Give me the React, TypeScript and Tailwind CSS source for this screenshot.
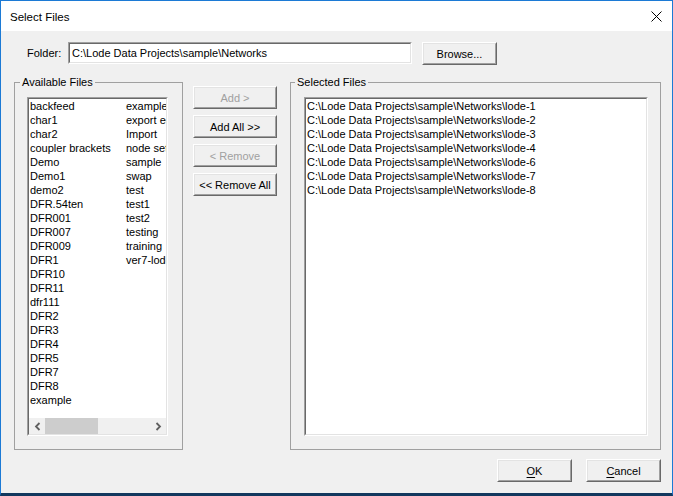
import React from "react";

const availableLeft = [
  "backfeed", "char1", "char2", "coupler brackets", "Demo", "Demo1", "demo2", "DFR.54ten",
  "DFR001", "DFR007", "DFR009", "DFR1", "DFR10", "DFR11", "dfr111", "DFR2", "DFR3", "DFR4",
  "DFR5", "DFR7", "DFR8", "example",
];

const availableRight = [
  "example2", "export edits", "Import", "node settings", "sample", "swap", "test", "test1",
  "test2", "testing", "training", "ver7-lode",
];

const selected = [1, 2, 3, 4, 6, 7, 8].map(
  (n) => `C:\\Lode Data Projects\\sample\\Networks\\lode-${n}`
);

// classic raised button (2px bevel)
const Btn = ({
  className,
  disabled,
  children,
}: {
  className: string;
  disabled?: boolean;
  children: React.ReactNode;
}) => (
  <button
    className={`h-[23px] shrink-0 border border-t-white border-l-white border-r-[#696969] border-b-[#696969] bg-[#f0f0f0] p-0 ${className}`}
  >
    <div
      className={`flex h-full w-full items-center justify-center border border-t-[#e3e3e3] border-l-[#e3e3e3] border-r-[#a0a0a0] border-b-[#a0a0a0] text-[11px] leading-[14px] ${
        disabled ? "text-[#a0a0a0]" : "text-black"
      }`}
    >
      {children}
    </div>
  </button>
);

// sunken 3d box used by inputs and lists
const Sunken = ({ className, children }: { className: string; children?: React.ReactNode }) => (
  <div
    className={`shrink-0 border border-t-[#a0a0a0] border-l-[#a0a0a0] border-r-white border-b-white ${className}`}
  >
    <div className="flex h-full w-full flex-col border border-t-[#696969] border-l-[#696969] border-r-[#e3e3e3] border-b-[#e3e3e3] bg-white">
      {children}
    </div>
  </div>
);

const Chevron = ({ dir }: { dir: "l" | "r" }) => (
  <svg width="7" height="9" viewBox="0 0 7 9">
    <path
      d={dir === "l" ? "M5.5 1 L2 4.5 L5.5 8" : "M1.5 1 L5 4.5 L1.5 8"}
      fill="none"
      stroke="#606060"
      strokeWidth="1.8"
    />
  </svg>
);

export default function App() {
  return (
    <div
      className="flex h-[496px] w-[673px] flex-col border border-[#1c7ad5] border-b-[3px] border-b-[#12385e] bg-[#f0f0f0] text-[11px] leading-[14px] text-black"
      style={{ fontFamily: '"Liberation Sans", Arial, sans-serif' }}
    >
      {/* title bar */}
      <div className="flex h-[30px] shrink-0 items-center justify-between bg-white pl-[9px] pr-[10px]">
        <span className="pt-[1px] text-[11.5px]">Select Files</span>
        <svg width="11" height="11" viewBox="0 0 11 11">
          <path d="M0.5 0.5 L10.5 10.5 M10.5 0.5 L0.5 10.5" stroke="#000" strokeWidth="1" />
        </svg>
      </div>

      {/* folder row */}
      <div className="mt-[11px] flex items-start">
        <span className="ml-[26px] mt-[4px] w-[41px]">Folder:</span>
        <Sunken className="h-[22px] w-[344px]">
          <div className="px-[2px] pt-[2px]">C:\Lode Data Projects\sample\Networks</div>
        </Sunken>
        <Btn className="ml-[10px] w-[75px]">Browse...</Btn>
      </div>

      {/* groups */}
      <div className="mt-[10px] flex h-[375px] items-start">
        <fieldset className="ml-[13px] h-[375px] w-[169px] border border-[#a0a0a0]">
          <legend className="ml-[5px] px-[2px] leading-[14px]">Available Files</legend>
          <div className="pl-[12px] pt-[8px]">
            <Sunken className="h-[339px] w-[141px]">
              <div className="flex flex-1 overflow-hidden whitespace-nowrap pl-[1px]">
                <div className="w-[96px] shrink-0">
                  {availableLeft.map((f) => (
                    <div key={f}>{f}</div>
                  ))}
                </div>
                <div className="shrink-0">
                  {availableRight.map((f) => (
                    <div key={f}>{f}</div>
                  ))}
                </div>
              </div>
              <div className="flex h-[16px] shrink-0 items-center bg-[#f0f0f0]">
                <div className="flex h-full w-[16px] items-center justify-center">
                  <Chevron dir="l" />
                </div>
                <div className="h-full w-[53px] bg-[#cdcdcd]" />
                <div className="flex-1" />
                <div className="flex h-full w-[16px] items-center justify-center">
                  <Chevron dir="r" />
                </div>
              </div>
            </Sunken>
          </div>
        </fieldset>

        <div className="ml-[10px] mt-[11px] flex w-[84px] flex-col gap-[6px]">
          <Btn className="w-[84px]" disabled>
            Add &gt;
          </Btn>
          <Btn className="w-[84px]">Add All &gt;&gt;</Btn>
          <Btn className="w-[84px]" disabled>
            &lt; Remove
          </Btn>
          <Btn className="w-[84px]">&lt;&lt; Remove All</Btn>
        </div>

        <fieldset className="ml-[13px] h-[375px] w-[371px] border border-[#a0a0a0]">
          <legend className="ml-[4px] px-[2px] leading-[14px]">Selected Files</legend>
          <div className="pl-[13px] pt-[8px]">
            <Sunken className="h-[339px] w-[344px]">
              <div className="pl-[1px]">
                {selected.map((s) => (
                  <div key={s}>{s}</div>
                ))}
              </div>
            </Sunken>
          </div>
        </fieldset>
      </div>

      {/* footer */}
      <div className="mt-[9px] flex justify-end gap-[14px] pr-[11px]">
        <Btn className="w-[75px]">
          <span className="underline underline-offset-[2px]">O</span>K
        </Btn>
        <Btn className="w-[75px]">
          <span className="underline underline-offset-[2px]">C</span>ancel
        </Btn>
      </div>
    </div>
  );
}
